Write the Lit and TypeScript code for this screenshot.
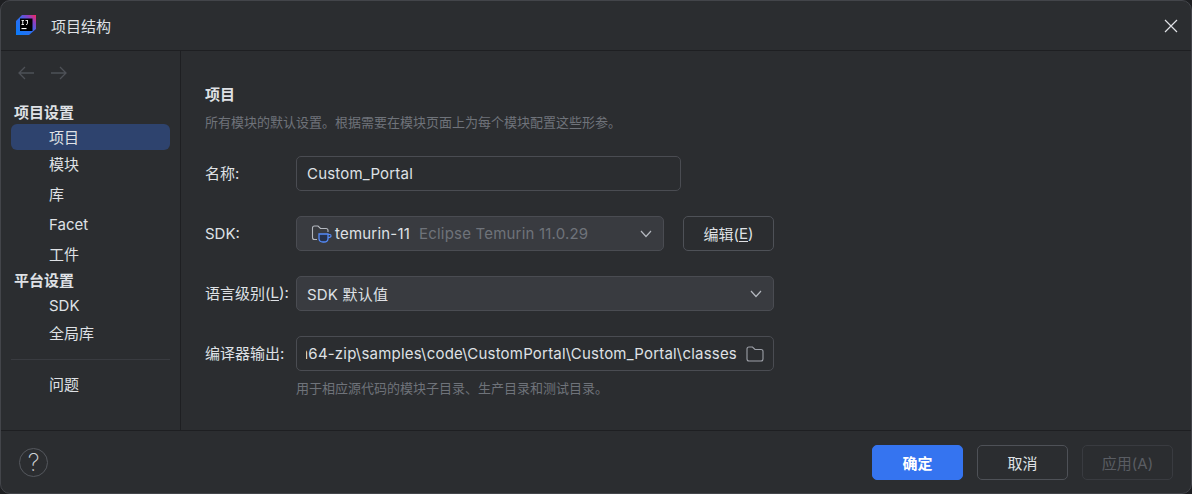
import { LitElement, html, css } from "lit";
import { customElement } from "lit/decorators.js";

const chevron = html`<svg class="chev" width="12" height="8" viewBox="0 0 12 8" fill="none"><path d="M1 1 L6 6.5 L11 1" stroke="#b4b8bf" stroke-width="1.2"/></svg>`;

@customElement("app-root")
export class AppRoot extends LitElement {
  static styles = css`
    :host { display: block; width: 1192px; height: 494px; background: #1e1f22; font-family: Inter, "Noto Sans CJK SC", sans-serif; font-size: 15px; color: #dfe1e5; overflow: hidden; }
    * { box-sizing: border-box; }
    .win { width: 1192px; height: 494px; background: #2b2d30; border: 1px solid #43454a; border-radius: 10px; display: flex; flex-direction: column; overflow: hidden; }
    .title { height: 50px; flex: none; display: flex; align-items: center; padding: 0 12px 0 14px; border-bottom: 1px solid #1e1f22; }
    .title .logo { flex: none; margin-right: 14px; }
    .title .t { flex: 1; }
    .title .close { flex: none; }
    .body { flex: 1; display: flex; min-height: 0; }
    .side { width: 180px; flex: none; border-right: 1px solid #1e1f22; padding: 10px 10px 0 10px; display: flex; flex-direction: column; }
    .nav { display: flex; gap: 15px; height: 41px; padding: 2px 0 0 6px; align-items: flex-start; }
    .nav svg { display: block; margin-top: 3px; }
    .h { padding: 0 0 4px 3px; font-weight: 700; display: flex; align-items: center; height: 22px; }
    .i { padding: 0 0 2px 38px; display: flex; align-items: center; height: 30px; border-radius: 6px; }
    .i.lat { padding-bottom: 0; }
    .i.sel { background: #2e436e; height: 26px; width: 159px; }
    .i.r29 { height: 29px; padding-bottom: 3px; }
    .h.h24 { height: 24px; }
    .i.r25 { height: 25px; }
    .sep { height: 1px; background: #393b40; margin: 11px 0 10px 0; }
    .i.last { height: 28px; }
    .main { flex: 1; padding: 32px 0 0 24px; display: flex; flex-direction: column; }
    .mt { font-weight: 700; height: 22px; padding-bottom: 2px; display: flex; align-items: center; }
    .desc { color: #6f737a; font-size: 13px; height: 18px; padding-bottom: 2px; margin-top: 8px; display: flex; align-items: center; }
    .form { display: grid; grid-template-columns: 91px 478px; row-gap: 25px; margin-top: 25px; }
    .lbl { display: flex; align-items: center; height: 35px; padding-bottom: 2px; white-space: nowrap; }
    .lbl.lat { padding-bottom: 0; }
    .u { text-decoration: underline; text-underline-offset: 2px; }
    .row { display: flex; align-items: center; gap: 19px; }
    .f { height: 35px; border: 1px solid #4a4c52; border-radius: 5px; display: flex; align-items: center; padding: 0 10px; white-space: nowrap; overflow: hidden; letter-spacing: 0.2px; }
    .name { width: 385px; }
    .combo { background: #393b40; justify-content: space-between; padding-right: 11px; }
    .sdk { width: 368px; padding-left: 14px; }
    .sdk .v { display: flex; align-items: center; gap: 3px; }
    .sdk .dim { color: #6f737a; margin-left: 6px; }
    .wide { width: 478px; }
    .btn { width: 91px; height: 35px; border: 1px solid #4e5157; border-radius: 5px; display: flex; align-items: center; justify-content: center; flex: none; }
    .path { justify-content: space-between; padding: 0 9px 0 0; }
    .clip { flex: 1; min-width: 0; overflow: hidden; display: flex; justify-content: flex-end; margin: 0 9px 0 9px; }
    .clip span { flex: none; }
    .hint { color: #6f737a; font-size: 13px; margin: 7px 0 0 91px; height: 18px; display: flex; align-items: center; }
    .foot { height: 63px; flex: none; border-top: 1px solid #1e1f22; display: flex; align-items: center; padding: 0 18px 0 18px; gap: 14px; }
    .help { width: 29px; height: 29px; border-radius: 50%; border: 1px solid #55585e; display: flex; align-items: center; justify-content: center; margin-right: auto; font-size: 24px; font-weight: 200; color: #cfd1d6; }
    .ok { background: #3574f0; border-color: #3574f0; color: #fff; font-weight: 700; }
    .off { border-color: #393b40; color: #5a5d63; }
  `;

  render() {
    return html`<div class="win">
      <div class="title">
        <svg class="logo" width="22" height="22" viewBox="0 0 22 22">
          <defs>
            <linearGradient id="g" x1="0" y1="1" x2="1" y2="0"><stop offset="0" stop-color="#087cfa"/><stop offset="0.5" stop-color="#2f6df0"/><stop offset="0.78" stop-color="#8e3fc0"/><stop offset="1" stop-color="#fe2857"/></linearGradient>
          </defs>
          <path d="M7 0 H21 V14 L14 20 H1 V6 Z" fill="url(#g)"/>
          <rect x="5" y="3.5" width="12.5" height="12.5" fill="#000"/>
          <path d="M6.5 5.5 H9 M7.75 5.5 V9.5 M6.5 9.5 H9 M12.5 5.5 V8.5 Q12.5 9.5 11 9.5 M10.5 5.5 H13" stroke="#fff" stroke-width="0.9" fill="none"/>
          <rect x="6.5" y="13" width="5" height="1.1" fill="#fff"/>
        </svg>
        <span class="t">项目结构</span>
        <svg class="close" width="16" height="16" viewBox="0 0 16 16"><path d="M2 2 L14 14 M14 2 L2 14" stroke="#dfe1e5" stroke-width="1.2"/></svg>
      </div>
      <div class="body">
        <div class="side">
          <div class="nav">
            <svg width="18" height="14" viewBox="0 0 18 14" fill="none"><path d="M17 7 H2 M8 1 L2 7 L8 13" stroke="#4e5157" stroke-width="1.3"/></svg>
            <svg width="18" height="14" viewBox="0 0 18 14" fill="none"><path d="M1 7 H16 M10 1 L16 7 L10 13" stroke="#4e5157" stroke-width="1.3"/></svg>
          </div>
          <div class="h">项目设置</div>
          <div class="i sel">项目</div>
          <div class="i r29">模块</div>
          <div class="i">库</div>
          <div class="i lat">Facet</div>
          <div class="i">工件</div>
          <div class="h h24">平台设置</div>
          <div class="i r25 lat">SDK</div>
          <div class="i">全局库</div>
          <div class="sep"></div>
          <div class="i last">问题</div>
        </div>
        <div class="main">
          <div class="mt">项目</div>
          <div class="desc">所有模块的默认设置。根据需要在模块页面上为每个模块配置这些形参。</div>
          <div class="form">
            <div class="lbl">名称:</div>
            <div class="f name">Custom_Portal</div>
            <div class="lbl lat">SDK:</div>
            <div class="row">
              <div class="f combo sdk">
                <span class="v">
                  <svg width="21" height="20" viewBox="0 0 21 20" fill="none">
                    <path d="M6 15.5 H3.5 Q1.5 15.5 1.5 13.5 V4 Q1.5 2 3.5 2 H7 L9.5 4.5 H15 Q17 4.5 17 6.5 V8" stroke="#b4b8bf" stroke-width="1.1"/>
                    <path d="M8 10 H17 V14.5 Q17 18 13 18 H12 Q8 18 8 14.5 Z" fill="#25324d" stroke="#548af7" stroke-width="1.3"/>
                    <path d="M17 10.5 H19 Q20 10.5 20 12 Q20 13.5 17 13.7" stroke="#548af7" stroke-width="1.2"/>
                  </svg>
                  <span>temurin-11</span><span class="dim">Eclipse Temurin 11.0.29</span>
                </span>
                ${chevron}
              </div>
              <div class="btn">编辑(<span class="u">E</span>)</div>
            </div>
            <div class="lbl">语言级别(<span class="u">L</span>):</div>
            <div class="f combo wide"><span>SDK 默认值</span>${chevron}</div>
            <div class="lbl">编译器输出:</div>
            <div class="f wide path">
              <div class="clip"><span>n64-zip\\samples\\code\\CustomPortal\\Custom_Portal\\classes</span></div>
              <svg width="18" height="16" viewBox="0 0 18 16" fill="none"><path d="M1 13 V3 Q1 1 3 1 H6.5 L9 3.5 H15 Q17 3.5 17 5.5 V13 Q17 15 15 15 H3 Q1 15 1 13 Z" stroke="#9da0a8" stroke-width="1.1"/></svg>
            </div>
          </div>
          <div class="hint">用于相应源代码的模块子目录、生产目录和测试目录。</div>
        </div>
      </div>
      <div class="foot">
        <div class="help">?</div>
        <div class="btn ok">确定</div>
        <div class="btn">取消</div>
        <div class="btn off">应用(A)</div>
      </div>
    </div>`;
  }
}
